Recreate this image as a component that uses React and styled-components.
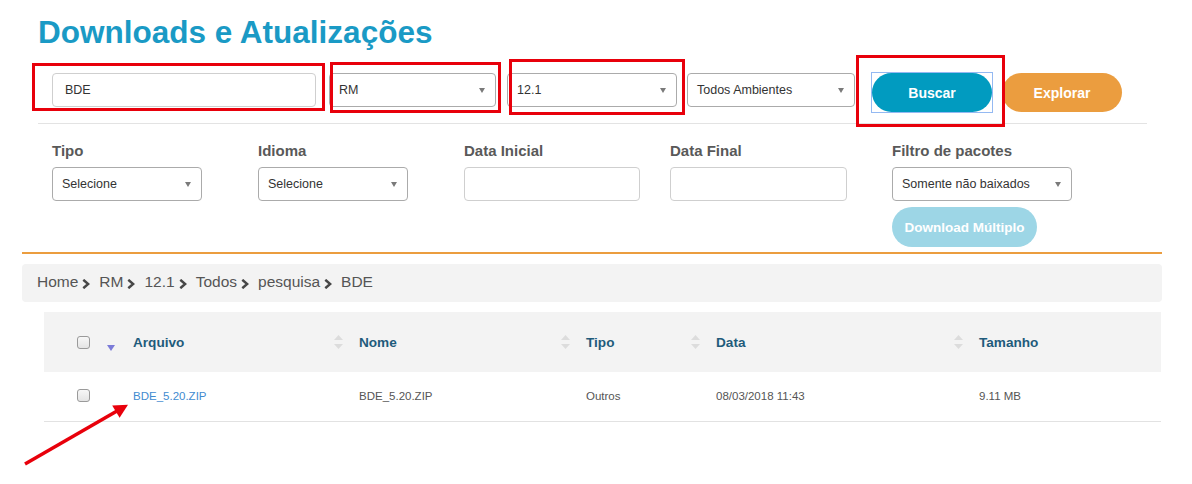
import React from "react";
import styled, { createGlobalStyle } from "styled-components";

const GlobalStyle = createGlobalStyle`
  * { box-sizing: border-box; }
  body {
    margin: 0;
    background: #fff;
    font-family: "Liberation Sans", Arial, sans-serif;
  }
`;

const columns = [
  { key: "check", width: 81 },
  { key: "arquivo", label: "Arquivo", width: 226 },
  { key: "nome", label: "Nome", width: 227 },
  { key: "tipo", label: "Tipo", width: 130 },
  { key: "data", label: "Data", width: 263 },
  { key: "tamanho", label: "Tamanho", width: 190 },
];

const gridCols = columns.map((c) => `${c.width}px`).join(" ");

const trail = ["Home", "RM", "12.1", "Todos", "pesquisa", "BDE"];

export default function App() {
  return (
    <Page>
      <GlobalStyle />
      <Top>
        <Title>Downloads e Atualizações</Title>
        <SearchRow>
          <Field $w={264}>BDE</Field>
          <Select $w={167} $ml={13}>
            RM
            <Caret />
          </Select>
          <Select $w={170} $ml={11}>
            12.1
            <Caret />
          </Select>
          <Select $w={168} $ml={10}>
            Todos Ambientes
            <Caret />
          </Select>
          <FocusFrame>
            <Pill $bg="#019bc0">Buscar</Pill>
          </FocusFrame>
          <Pill $bg="#eb9d3f" $ml={9}>
            Explorar
          </Pill>
        </SearchRow>
        <Divider />
        <Filters>
          <FilterCol>
            <Label>Tipo</Label>
            <Select $w={150}>
              Selecione
              <Caret />
            </Select>
          </FilterCol>
          <FilterCol>
            <Label>Idioma</Label>
            <Select $w={150}>
              Selecione
              <Caret />
            </Select>
          </FilterCol>
          <FilterCol>
            <Label>Data Inicial</Label>
            <Field $w={176} />
          </FilterCol>
          <FilterCol>
            <Label>Data Final</Label>
            <Field $w={177} />
          </FilterCol>
          <FilterCol>
            <Label>Filtro de pacotes</Label>
            <Select $w={180}>
              Somente não baixados
              <Caret />
            </Select>
            <MultiButton>Download Múltiplo</MultiButton>
          </FilterCol>
        </Filters>
      </Top>

      <OrangeLine />

      <Breadcrumb>
        {trail.map((item, i) => (
          <React.Fragment key={item}>
            {i > 0 && <Chevron />}
            <span>{item}</span>
          </React.Fragment>
        ))}
      </Breadcrumb>

      <Table>
        <HeadRow>
          <HeadCell $first>
            <Check />
            <SortDesc />
          </HeadCell>
          {columns.slice(1).map((c) => (
            <HeadCell key={c.key}>
              <span>{c.label}</span>
              {c.key !== "tamanho" && <SortBoth />}
            </HeadCell>
          ))}
        </HeadRow>
        <BodyRow>
          <Cell $first>
            <Check />
          </Cell>
          <Cell>
            <FileLink>BDE_5.20.ZIP</FileLink>
          </Cell>
          <Cell>BDE_5.20.ZIP</Cell>
          <Cell>Outros</Cell>
          <Cell>08/03/2018 11:43</Cell>
          <Cell>9.11 MB</Cell>
        </BodyRow>
      </Table>

      <Mark $x={32} $y={63} $w={293} $h={48} />
      <Mark $x={330} $y={62} $w={171} $h={51} />
      <Mark $x={509} $y={59} $w={176} $h={56} />
      <Mark $x={856} $y={55} $w={149} $h={72} />
      <Arrow width="140" height="80" viewBox="0 395 140 80">
        <line x1="25" y1="464" x2="117" y2="411" stroke="#e8000b" strokeWidth="3.5" />
        <polygon points="128,404.7 119.6,417.8 112.2,405.6" fill="#e8000b" />
      </Arrow>
    </Page>
  );
}

function Chevron() {
  return (
    <ChevronSvg width="8" height="10" viewBox="0 0 8 10">
      <polyline points="1.3,0.8 6.2,5 1.3,9.2" fill="none" stroke="#474747" strokeWidth="2.5" />
    </ChevronSvg>
  );
}

function SortBoth() {
  return (
    <svg width="9" height="14" viewBox="0 0 9 14">
      <polygon points="4.5,0 9,5 0,5" fill="#dcdcdc" />
      <polygon points="0,9 9,9 4.5,14" fill="#dcdcdc" />
    </svg>
  );
}

function SortDesc() {
  return (
    <DescSvg width="8" height="6" viewBox="0 0 8 6">
      <polygon points="0,0 8,0 4,6" fill="#7b7bd8" />
    </DescSvg>
  );
}

const Page = styled.div`
  position: relative;
  width: 1192px;
  height: 484px;
  padding: 0 30px 0 22px;
  overflow: hidden;
`;

const Top = styled.div`
  padding: 0 15px 0 16px;
`;

const Title = styled.h1`
  margin: 14px 0 0;
  font-size: 31.5px;
  line-height: 36px;
  font-weight: bold;
  color: #1a9ac5;
`;

const SearchRow = styled.div`
  display: flex;
  align-items: flex-start;
  margin-top: 23px;
  padding-left: 14px;
`;

const Field = styled.div`
  display: flex;
  align-items: center;
  width: ${(p) => p.$w}px;
  height: 34px;
  margin-left: ${(p) => p.$ml || 0}px;
  padding-left: 12px;
  border: 1px solid #cfcfcf;
  border-radius: 4px;
  font-size: 12.5px;
  color: #333;
`;

const Select = styled(Field)`
  justify-content: space-between;
  padding: 0 10px 0 9px;
  border-color: #ababab;
`;

const Caret = styled.span`
  width: 0;
  height: 0;
  border-left: 3.5px solid transparent;
  border-right: 3.5px solid transparent;
  border-top: 5px solid #7a7a7a;
`;

const FocusFrame = styled.span`
  display: inline-flex;
  margin: -1px 0 0 16px;
  border: 1px solid #94b9f2;
`;

const Pill = styled.button`
  width: 120px;
  height: 39px;
  margin-left: ${(p) => p.$ml || 0}px;
  border: none;
  border-radius: 20px;
  background: ${(p) => p.$bg};
  color: #fff;
  font-family: "Liberation Sans", Arial, sans-serif;
  font-size: 14px;
  font-weight: bold;
`;

const Divider = styled.div`
  height: 1px;
  margin-top: 10px;
  background: #e3e3e3;
`;

const Filters = styled.div`
  display: grid;
  grid-template-columns: 206px 206px 206px 222px 1fr;
  margin-top: 18px;
  padding-left: 14px;
`;

const FilterCol = styled.div`
  display: flex;
  flex-direction: column;
  align-items: flex-start;
`;

const Label = styled.div`
  margin-bottom: 7px;
  font-size: 15px;
  line-height: 18px;
  font-weight: bold;
  color: #595959;
`;

const MultiButton = styled.button`
  width: 145px;
  height: 40px;
  margin-top: 6px;
  border: none;
  border-radius: 20px;
  background: #9dd6e6;
  color: #fff;
  font-family: "Liberation Sans", Arial, sans-serif;
  font-size: 13.5px;
  font-weight: bold;
`;

const OrangeLine = styled.div`
  height: 2px;
  margin-top: 5px;
  background: #eb9d3f;
`;

const Breadcrumb = styled.div`
  display: flex;
  align-items: center;
  height: 38px;
  margin-top: 10px;
  padding: 0 15px 2px;
  border-radius: 4px;
  background: #f3f3f3;
  font-size: 15.5px;
  line-height: 18px;
  color: #555;
`;

const ChevronSvg = styled.svg`
  margin: 4px 9px 0 4px;
`;

const Table = styled.div`
  margin: 10px 1px 0 22px;
`;

const HeadRow = styled.div`
  display: grid;
  grid-template-columns: ${gridCols};
  height: 60px;
  background: #f3f3f3;
`;

const HeadCell = styled.div`
  display: flex;
  align-items: center;
  justify-content: space-between;
  padding: 0 ${(p) => (p.$first ? 10 : 8)}px 0 ${(p) => (p.$first ? 33 : 8)}px;
  font-size: 13.6px;
  font-weight: bold;
  color: #1f5b7b;
`;

const DescSvg = styled.svg`
  margin-top: 11px;
`;

const BodyRow = styled.div`
  display: grid;
  grid-template-columns: ${gridCols};
  height: 50px;
  padding-bottom: 2px;
  border-bottom: 1px solid #e2e2e2;
`;

const Cell = styled.div`
  display: flex;
  align-items: center;
  padding-left: ${(p) => (p.$first ? 33 : 8)}px;
  font-size: 11.5px;
  color: #555;
`;

const FileLink = styled.a`
  color: #3f8bd0;
  text-decoration: none;
`;

const Check = styled.span`
  display: inline-block;
  width: 13px;
  height: 13px;
  border: 1px solid #9a9a9a;
  border-radius: 3px;
  background: linear-gradient(#f7f7f7, #e4e4e4);
`;

const Mark = styled.div`
  position: absolute;
  left: ${(p) => p.$x}px;
  top: ${(p) => p.$y}px;
  width: ${(p) => p.$w}px;
  height: ${(p) => p.$h}px;
  border: 3px solid #e8000b;
  pointer-events: none;
`;

const Arrow = styled.svg`
  position: absolute;
  left: 0;
  top: 395px;
  pointer-events: none;
`;
